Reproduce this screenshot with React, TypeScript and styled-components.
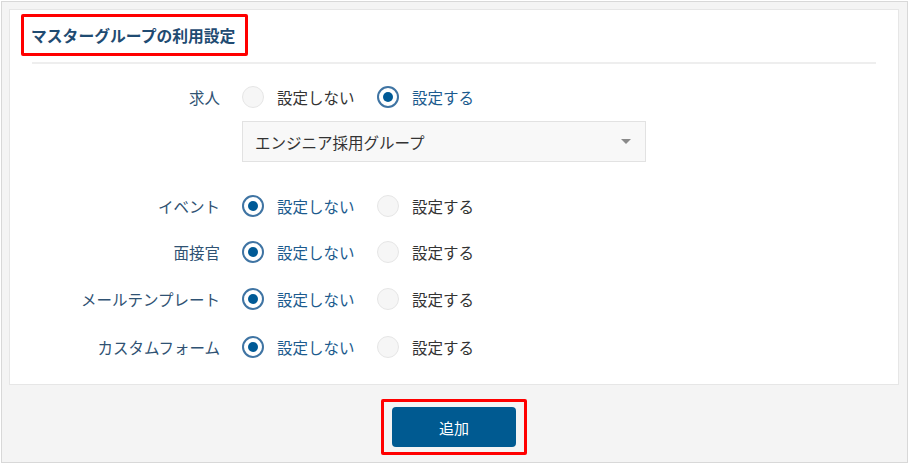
import * as React from "react";
import styled, { createGlobalStyle } from "styled-components";

const GlobalStyle = createGlobalStyle`
  html, body {
    margin: 0;
    padding: 0;
    background: #ffffff;
  }
  body {
    font-family: "Noto Sans CJK JP", "Noto Sans", sans-serif;
  }
`;

const Frame = styled.div`
  box-sizing: border-box;
  margin: 1px 0 0 1px;
  width: 907px;
  height: 462px;
  border: 1px solid #d8d8d8;
  background: #f4f4f4;
  padding: 7px 8px 0 7px;
  display: flex;
  flex-direction: column;
`;

const Panel = styled.section`
  box-sizing: border-box;
  background: #ffffff;
  border: 1px solid #e6e6e6;
  height: 376px;
  padding: 4px 22px 0 22px;
`;

const TitleBox = styled.div`
  box-sizing: border-box;
  display: inline-flex;
  align-items: center;
  height: 42px;
  margin-left: -11px;
  padding: 0 0 0 7px;
  width: 227px;
  border: 3px solid #ff0000;
  border-radius: 2px;
`;

const Title = styled.h2`
  margin: 0;
  font-size: 15.8px;
  font-weight: 700;
  color: #1f4b72;
  white-space: nowrap;
`;

const Divider = styled.hr`
  margin: 6px 0 0 0;
  border: none;
  height: 2px;
  background: #eeeeee;
`;

const Form = styled.div`
  display: grid;
  grid-template-columns: 188px 1fr;
  column-gap: 22px;
  align-items: center;
  padding-top: 22px;
`;

const Label = styled.div<{ $top?: number }>`
  text-align: right;
  font-size: 15.5px;
  color: #2f5273;
  height: 22px;
  line-height: 22px;
  margin-top: ${(p) => p.$top ?? 0}px;
  white-space: nowrap;
`;

const Options = styled.div<{ $top?: number }>`
  display: flex;
  align-items: center;
  height: 22px;
  margin-top: ${(p) => p.$top ?? 0}px;
`;

const Option = styled.label<{ $checked: boolean }>`
  display: flex;
  align-items: center;
  gap: 13px;
  width: 135px;
  font-size: 15.5px;
  color: ${(p) => (p.$checked ? "#1c5b8e" : "#333333")};
  white-space: nowrap;
  cursor: pointer;
`;

const Radio = styled.span<{ $checked: boolean }>`
  box-sizing: border-box;
  position: relative;
  flex: none;
  width: 22px;
  height: 22px;
  border-radius: 50%;
  border: ${(p) => (p.$checked ? "2px solid #3f74a3" : "1px solid #e6e6e6")};
  background: ${(p) => (p.$checked ? "#ffffff" : "#f6f6f6")};
  &::after {
    content: "";
    display: ${(p) => (p.$checked ? "block" : "none")};
    position: absolute;
    left: 4px;
    top: 4px;
    width: 10px;
    height: 10px;
    border-radius: 50%;
    background: #005a96;
  }
`;

const Select = styled.div`
  box-sizing: border-box;
  grid-column: 2;
  margin-top: 13px;
  width: 404px;
  height: 41px;
  background: #f8f8f8;
  border: 1px solid #e2e2e2;
  display: flex;
  align-items: center;
  justify-content: space-between;
  padding: 0 14px 0 12px;
  font-size: 15.5px;
  color: #333333;
`;

const Caret = styled.span`
  width: 0;
  height: 0;
  border-left: 5px solid transparent;
  border-right: 5px solid transparent;
  border-top: 5px solid #8a8a8a;
`;

const Footer = styled.div`
  display: flex;
  justify-content: center;
  padding-top: 14px;
`;

const ButtonBox = styled.div`
  box-sizing: border-box;
  width: 146px;
  height: 56px;
  border: 3px solid #ff0000;
  border-radius: 2px;
  padding: 5px 8px;
`;

const AddButton = styled.button`
  width: 124px;
  height: 40px;
  border: none;
  border-radius: 4px;
  background: #005a91;
  color: #ffffff;
  font-family: "Noto Sans CJK JP", "Noto Sans", sans-serif;
  font-size: 15px;
  cursor: pointer;
`;

type Row = { label: string; on: boolean; top: number };

const rows: Row[] = [
  { label: "イベント", on: false, top: 33 },
  { label: "面接官", on: false, top: 24 },
  { label: "メールテンプレート", on: false, top: 25 },
  { label: "カスタムフォーム", on: false, top: 26 },
];

const Choice = ({ on }: { on: boolean }) => (
  <>
    <Option $checked={!on}>
      <Radio $checked={!on} />
      設定しない
    </Option>
    <Option $checked={on}>
      <Radio $checked={on} />
      設定する
    </Option>
  </>
);

export default function App() {
  return (
    <>
      <GlobalStyle />
      <Frame>
        <Panel>
          <TitleBox>
            <Title>マスターグループの利用設定</Title>
          </TitleBox>
          <Divider />
          <Form>
            <Label>求人</Label>
            <Options>
              <Choice on={true} />
            </Options>
            <Select>
              エンジニア採用グループ
              <Caret />
            </Select>
            {rows.map((r) => (
              <React.Fragment key={r.label}>
                <Label $top={r.top}>{r.label}</Label>
                <Options $top={r.top}>
                  <Choice on={r.on} />
                </Options>
              </React.Fragment>
            ))}
          </Form>
        </Panel>
        <Footer>
          <ButtonBox>
            <AddButton>追加</AddButton>
          </ButtonBox>
        </Footer>
      </Frame>
    </>
  );
}
